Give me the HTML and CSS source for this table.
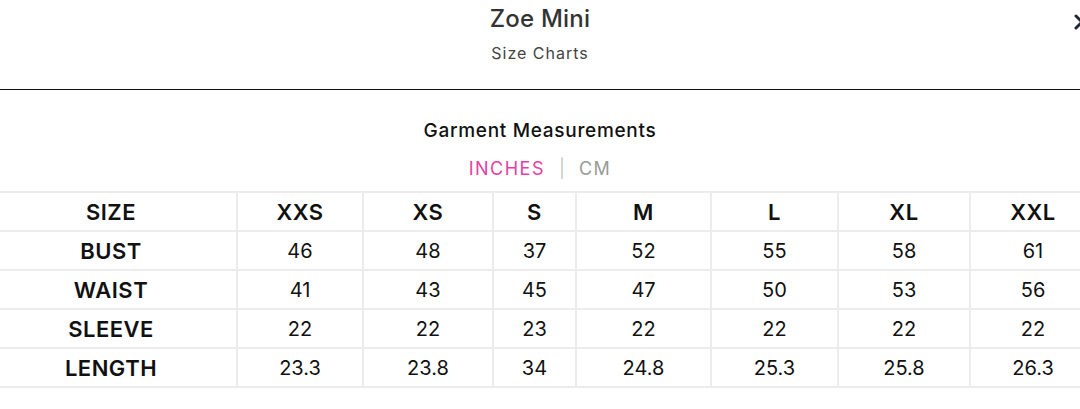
FILE: index.html
```html
<!DOCTYPE html>
<html lang="en">
<head>
<meta charset="utf-8">
<title>Zoe Mini – Size Charts</title>
<link rel="stylesheet" href="styles.css">
</head>
<body>
<div class="modal">
  <header class="modal-header">
    <h1 class="title">Zoe Mini</h1>
    <p class="subtitle">Size Charts</p>
    <button class="close" aria-label="Close">
      <svg width="20" height="20" viewBox="0 0 20 20"><path d="M4 4 L16 16 M16 4 L4 16" stroke="#1f2933" stroke-width="3" stroke-linecap="round" fill="none"/></svg>
    </button>
  </header>
  <section class="chart">
    <h2 class="chart-title">Garment Measurements</h2>
    <div class="units">
      <span class="unit active">INCHES</span>
      <span class="sep">|</span>
      <span class="unit">CM</span>
    </div>
    <table class="size-table">
      <colgroup>
        <col class="c-label">
        <col class="c-xxs">
        <col class="c-xs">
        <col class="c-s">
        <col class="c-m">
        <col class="c-l">
        <col class="c-xl">
        <col class="c-xxl">
      </colgroup>
      <thead>
        <tr><th>SIZE</th><th>XXS</th><th>XS</th><th>S</th><th>M</th><th>L</th><th>XL</th><th>XXL</th></tr>
      </thead>
      <tbody>
        <tr><th>BUST</th><td>46</td><td>48</td><td>37</td><td>52</td><td>55</td><td>58</td><td>61</td></tr>
        <tr><th>WAIST</th><td>41</td><td>43</td><td>45</td><td>47</td><td>50</td><td>53</td><td>56</td></tr>
        <tr><th>SLEEVE</th><td>22</td><td>22</td><td>23</td><td>22</td><td>22</td><td>22</td><td>22</td></tr>
        <tr><th>LENGTH</th><td>23.3</td><td>23.8</td><td>34</td><td>24.8</td><td>25.3</td><td>25.8</td><td>26.3</td></tr>
      </tbody>
    </table>
  </section>
</div>
</body>
</html>
```
FILE: styles.css
```css
html, body {
  margin: 0;
  padding: 0;
  background: #fff;
}
body {
  font-family: "Inter", "Noto Sans", sans-serif;
  color: #111;
  overflow: hidden;
  width: 1080px;
  height: 409px;
}
.modal {
  width: 1080px;
}
.modal-header {
  position: relative;
  height: 89px;
  border-bottom: 1px solid #111;
  display: flex;
  flex-direction: column;
  align-items: center;
}
.title {
  margin: 5px 0 0;
  font-size: 24px;
  line-height: 28px;
  font-weight: 500;
  color: #333;
  letter-spacing: 0.2px;
}
.subtitle {
  margin: 10px 0 0;
  font-size: 16px;
  line-height: 20px;
  color: #444;
  letter-spacing: 1px;
}
.close {
  position: absolute;
  right: -12px;
  top: 12px;
  border: 0;
  background: none;
  padding: 0;
  width: 20px;
  height: 20px;
}
.chart {
  display: flex;
  flex-direction: column;
  align-items: center;
}
.chart-title {
  margin: 30px 0 0;
  font-size: 19px;
  line-height: 22px;
  font-weight: 500;
  color: #111;
  letter-spacing: 0.7px;
}
.units {
  margin-top: 17px;
  display: flex;
  gap: 14px;
  font-size: 18px;
  line-height: 20px;
  letter-spacing: 1.5px;
}
.unit { color: #9a9a9a; }
.unit.active { color: #e83ea5; }
.sep { color: #c8c8c8; letter-spacing: 0; }
.size-table {
  margin-top: 12px;
  align-self: flex-start;
  margin-left: -16px;
  width: 1111px;
  table-layout: fixed;
  border-collapse: collapse;
}
.c-label { width: 252px; }
.c-xxs { width: 126px; }
.c-xs { width: 130px; }
.c-s { width: 83px; }
.c-m { width: 135px; }
.c-l { width: 127px; }
.c-xl { width: 132px; }
.c-xxl { width: 126px; }
.size-table th,
.size-table td {
  border: 2px solid #ececec;
  height: 37px;
  padding: 0;
  text-align: center;
  vertical-align: middle;
  font-size: 20px;
  line-height: 22px;
  color: #111;
}
.size-table th {
  font-size: 22px;
  font-weight: 600;
  letter-spacing: 0.5px;
}
.size-table td { font-weight: 400; }
```
